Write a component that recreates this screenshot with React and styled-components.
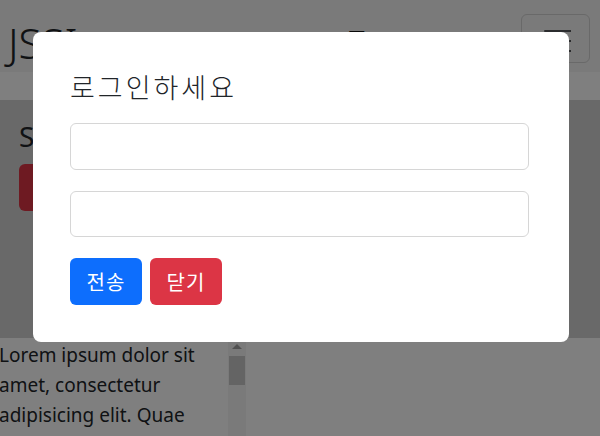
import React from 'react';
import styled, { createGlobalStyle } from 'styled-components';

const GlobalStyle = createGlobalStyle`
  html, body {
    margin: 0;
    padding: 0;
    width: 600px;
    height: 436px;
    overflow: hidden;
    background: #ffffff;
    font-family: "Noto Sans", "Noto Sans CJK KR", sans-serif;
    color: #212529;
  }
  * {
    box-sizing: border-box;
  }
`;

const Page = styled.div`
  position: relative;
  width: 600px;
  height: 436px;
  overflow: hidden;
`;

const Navbar = styled.nav`
  height: 72px;
  background: #f4f4f4;
  display: flex;
  align-items: flex-start;
  padding: 14px 10px 0 8px;
`;

const Brand = styled.div`
  width: 341px;
  font-size: 42px;
  font-weight: 300;
  line-height: 50px;
  margin-top: 4px;
  white-space: nowrap;
`;

const NavLink = styled.div`
  font-size: 28px;
  line-height: 34px;
  margin-top: 9px;
  color: #111;
`;

const Toggler = styled.button`
  width: 69px;
  height: 49px;
  margin-left: auto;
  border: 1px solid #d2d2d2;
  border-radius: 6px;
  background: transparent;
  padding: 0;
  display: flex;
  align-items: center;
  justify-content: center;
`;

const Band = styled.div`
  height: 28px;
  background: #ffffff;
`;

const Hero = styled.section`
  height: 238px;
  background: #d2d2d2;
  padding: 20px 19px 0;
`;

const HeroTitle = styled.h1`
  margin: 0 0 10px;
  font-size: 28px;
  font-weight: 400;
  line-height: 1.2;
`;

const HeroButton = styled.button`
  width: 120px;
  height: 47px;
  border: none;
  border-radius: 6px;
  background: #dc3545;
  color: #fff;
  font-size: 20px;
`;

const ContentRow = styled.div`
  display: flex;
  height: 98px;
`;

const ScrollBox = styled.div`
  width: 228px;
  overflow: hidden;
  padding-top: 2px;
`;

const Paragraph = styled.p`
  margin: 0 0 0 -1px;
  font-size: 19px;
  line-height: 30px;
  color: #212529;
  white-space: nowrap;
`;

const ScrollTrack = styled.div`
  width: 18px;
  background: #f4f4f4;
  display: flex;
  flex-direction: column;
  align-items: center;
  padding-top: 6px;
`;

const ScrollArrow = styled.div`
  width: 0;
  height: 0;
  border-left: 5px solid transparent;
  border-right: 5px solid transparent;
  border-bottom: 5px solid #a3a3a3;
`;

const ScrollThumb = styled.div`
  width: 16px;
  height: 29px;
  margin-top: 7px;
  background: #c8c8c8;
`;

const Overlay = styled.div`
  position: absolute;
  inset: 0;
  background: rgba(0, 0, 0, 0.5);
  padding: 32px 0 0 33px;
`;

const Modal = styled.div`
  width: 536px;
  height: 310px;
  background: #ffffff;
  border-radius: 8px;
  padding: 38px 40px 37px 37px;
  display: flex;
  flex-direction: column;
`;

const ModalTitle = styled.h3`
  margin: 0 0 19px;
  font-family: "Noto Sans CJK KR", sans-serif;
  font-size: 27px;
  font-weight: 300;
  letter-spacing: 3px;
  line-height: 34px;
  color: #212529;
`;

const Input = styled.input`
  width: 100%;
  height: 47px;
  border: 1px solid #d6d6d6;
  border-radius: 6px;
  margin-bottom: 21px;
  padding: 0 14px;
  font-size: 18px;
  background: #fff;
  outline: none;
`;

const ButtonRow = styled.div`
  display: flex;
  gap: 8px;
`;

const Button = styled.button`
  width: 72px;
  height: 47px;
  border: none;
  border-radius: 6px;
  background: ${({ $variant }) => ($variant === 'danger' ? '#dc3545' : '#0d6efd')};
  color: #ffffff;
  font-family: "Noto Sans CJK KR", sans-serif;
  font-size: 20px;
  font-weight: 400;
  letter-spacing: 1px;
  line-height: 1;
  padding: 0;
`;

const HamburgerIcon = () => (
  <svg width="30" height="30" viewBox="0 0 30 30">
    <path
      d="M4 7h26M4 17h26M4 27h26"
      stroke="rgba(33,37,41,0.75)"
      strokeWidth="2"
      strokeLinecap="round"
    />
  </svg>
);

const App = () => {
  return (
    <Page>
      <GlobalStyle />
      <Navbar>
        <Brand>JSSI</Brand>
        <NavLink>T</NavLink>
        <Toggler>
          <HamburgerIcon />
        </Toggler>
      </Navbar>
      <Band />
      <Hero>
        <HeroTitle>Sale</HeroTitle>
        <HeroButton>Buy</HeroButton>
      </Hero>
      <ContentRow>
        <ScrollBox>
          <Paragraph>Lorem ipsum dolor sit</Paragraph>
          <Paragraph>amet, consectetur</Paragraph>
          <Paragraph>adipisicing elit. Quae</Paragraph>
        </ScrollBox>
        <ScrollTrack>
          <ScrollArrow />
          <ScrollThumb />
        </ScrollTrack>
      </ContentRow>

      <Overlay>
        <Modal>
          <ModalTitle>로그인하세요</ModalTitle>
          <Input type="text" />
          <Input type="password" />
          <ButtonRow>
            <Button>전송</Button>
            <Button $variant="danger">닫기</Button>
          </ButtonRow>
        </Modal>
      </Overlay>
    </Page>
  );
};

export default App;
